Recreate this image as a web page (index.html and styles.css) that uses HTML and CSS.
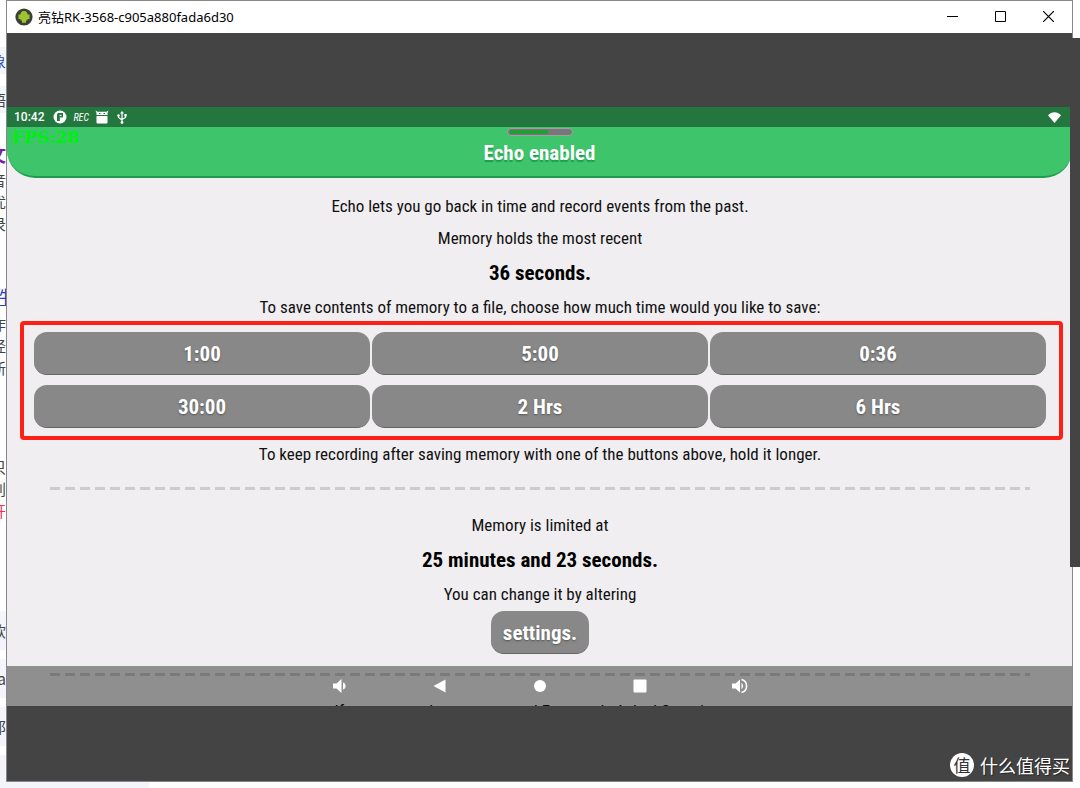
FILE: index.html
```
<!DOCTYPE html>
<html lang="en">
<head>
    <meta charset="UTF-8">
    <meta name="viewport" content="width=device-width, initial-scale=1.0">
    <title>Echo</title>
    <link rel="stylesheet" href="styles.css">
</head>
<body>
    <div class="desktop">
        <!-- page behind the window, only its edge is visible -->
        <div class="behind" lang="zh">
            <div class="chip blue">象</div>
            <div class="chip">语</div>
            <div class="heading">文</div>
            <div class="para"><span>音<br>优<br>录</span></div>
            <div class="link-line"><a href="#">件</a></div>
            <div class="para"><span>作<br>经<br>新</span></div>
            <div class="para lower"><span>只<br>别<br><span class="red">开</span></span></div>
            <div class="chip tall first">软</div>
            <div class="chip tall">a</div>
            <div class="chip tall">那</div>
        </div>
        <div class="behind-box"></div>

        <div class="window">
            <div class="title-bar">
                <svg class="app-icon" width="18" height="18" viewBox="0 0 18 18">
                    <circle cx="9" cy="9" r="8.6" fill="#3c3f3a"/>
                    <path d="M5.5 6.500a3.500 3.500 0 0 1 7 0h2v4.500h-2v1.500h-1.500v2.200H7v-2.200H5.500V11h-2V6.500z" fill="#9cc62e"/>
                </svg>
                <span class="title">亮钻RK-3568-c905a880fada6d30</span>
                <button class="win-btn" aria-label="Minimize"><svg width="11" height="11"><path d="M0 5.500h11" stroke="#000"/></svg></button>
                <button class="win-btn" aria-label="Maximize"><svg width="11" height="11"><path d="M.5.5h10v10H.5z" fill="none" stroke="#000"/></svg></button>
                <button class="win-btn" aria-label="Close"><svg width="11" height="11"><path d="M0 0l11 11M11 0L0 11" stroke="#000" stroke-width="1.2"/></svg></button>
            </div>

            <div class="screen">
                <div class="status-bar">
                    <span class="clock">10:42</span>
                    <svg width="14" height="14" viewBox="0 0 14 14"><circle cx="7" cy="7" r="6.500" fill="#fff"/><path d="M4 11V4.500a1.500 1.500 0 0 1 1.500-1.500H10v4.500H6.800V11z" fill="#24763f"/><path d="M6.500 4.800h2v1.400h-2z" fill="#fff"/></svg>
                    <span class="rec">REC</span>
                    <svg width="14" height="14" viewBox="0 0 14 14"><path d="M.5.5L2.500 1.800h9L13.500.5 12.500 3v2h-11V3zM1.500 6h11v6.500a1 1 0 0 1-1 1h-9a1 1 0 0 1-1-1z" fill="#fff"/><path d="M4 3h1.500v1H4zM8.500 3H10v1H8.500z" fill="#24763f"/></svg>
                    <svg class="usb" width="10" height="13" viewBox="0 0 10 13"><path d="M5 1v11M1.500 4.500v2L5 9M8.500 4v2.500L5 8.500" fill="none" stroke="#fff" stroke-width="1.200"/><path d="M5 0l2 2.500H3z" fill="#fff"/><circle cx="5" cy="11.500" r="1.400" fill="#fff"/><circle cx="1.500" cy="4.500" r="1.200" fill="#fff"/><path d="M7.300 3h2.400v2.400H7.300z" fill="#fff"/></svg>
                    <svg class="wifi" width="13" height="11" viewBox="0 0 13 11"><path d="M0 3.200C3.500-.8 9.500-.8 13 3.200L6.500 11z" fill="#fff"/></svg>
                </div>
                <header class="app-header">
                    <span class="fps">FPS:28</span>
                    <div class="level"><div class="level-fill"></div></div>
                    <h1>Echo enabled</h1>
                </header>

                <main>
                    <p>Echo lets you go back in time and record events from the past.</p>
                    <p>Memory holds the most recent</p>
                    <h2>36 seconds.</h2>
                    <p class="tight">To save contents of memory to a file, choose how much time would you like to save:</p>
                    <div class="save-buttons">
                        <button class="btn">1:00</button>
                        <button class="btn">5:00</button>
                        <button class="btn">0:36</button>
                        <button class="btn">30:00</button>
                        <button class="btn">2 Hrs</button>
                        <button class="btn">6 Hrs</button>
                    </div>
                    <p class="tight">To keep recording after saving memory with one of the buttons above, hold it longer.</p>
                    <div class="divider"></div>
                    <p>Memory is limited at</p>
                    <h2>25 minutes and 23 seconds.</h2>
                    <p class="tight">You can change it by altering</p>
                    <button class="btn settings">settings.</button>
                    <div class="divider"></div>
                    <p>If you want to learn more, read Frequently Asked Questions at</p>
                </main>

                <nav class="nav-bar">
                    <button aria-label="Volume down"><svg width="16" height="16" viewBox="0 0 16 16"><path d="M1 5.500h3.500L9.500 1v14l-5-4.500H1z" fill="#fff"/><path d="M11.500 4.800a4 4 0 0 1 0 6.400z" fill="#fff" stroke="#fff"/></svg></button>
                    <button aria-label="Back"><svg width="16" height="16" viewBox="0 0 16 16"><path d="M1.500 8L13.500 1.500v13z" fill="#fff"/></svg></button>
                    <button aria-label="Home"><svg width="16" height="16" viewBox="0 0 16 16"><circle cx="8" cy="8" r="6" fill="#fff"/></svg></button>
                    <button aria-label="Recents"><svg width="16" height="16" viewBox="0 0 16 16"><rect x="1.500" y="1.500" width="13" height="13" rx="1" fill="#fff"/></svg></button>
                    <button aria-label="Volume up"><svg width="16" height="16" viewBox="0 0 16 16"><path d="M0 5.500h3.500L8 1.500v13l-4.500-4H0z" fill="#fff"/><path d="M9.500 4.800a4 4 0 0 1 0 6.400z" fill="#fff"/><path d="M9.500 1.500a6.700 6.700 0 0 1 0 13" fill="none" stroke="#fff" stroke-width="1.600"/></svg></button>
                </nav>
            </div>

            <div class="watermark" lang="zh">
                <span class="badge">值</span>
                <span>什么值得买</span>
            </div>
        </div>

        <div class="side-panel"></div>
    </div>
</body>
</html>
```
FILE: styles.css
```
* {
    box-sizing: border-box;
}

body {
    margin: 0;
    background-color: #fff;
    color: #111;
    font-family: "Roboto Condensed", Roboto, sans-serif;
}

h1, h2, p {
    margin: 0;
}

button {
    border: none;
    padding: 0;
    background: none;
    font-family: inherit;
    cursor: pointer;
}

svg {
    display: block;
}

.desktop {
    position: relative;
    display: flex;
    height: 100vh;
    padding: 0 7px 6px 0;
    overflow: hidden;
}

/* page behind */
.behind {
    width: 6px;
    flex: none;
    padding-top: 47px;
    overflow: hidden;
    font: 15px/22px "Noto Sans CJK SC", sans-serif;
    color: #444;
}

.behind > div {
    display: flex;
    justify-content: flex-end;
}

.behind .chip {
    height: 27px;
    margin-bottom: 12px;
    line-height: 27px;
    background-color: #f4f5fa;
}

.behind .chip.tall {
    height: 39px;
    margin-bottom: 9px;
    line-height: 39px;
}

.behind .chip.first {
    margin-top: 89px;
}

.behind .blue {
    color: #2a3fc0;
}

.behind .heading {
    margin-top: 30px;
    color: #7a1fa8;
    font-size: 18px;
    font-weight: bold;
}

.behind .para {
    margin-top: 4px;
}

.behind .link-line {
    justify-content: center;
    margin: 50px 0 6px;
    font-size: 18px;
}

.behind .link-line a {
    color: #2a3fc0;
}

.behind .para.lower {
    margin-top: 77px;
}

.behind .red {
    color: #f0325a;
}

.behind-box {
    position: absolute;
    left: 0;
    bottom: 0;
    width: 149px;
    height: 33px;
    background-color: #f4f5fa;
}

/* window */
.window {
    position: relative;
    flex: 1;
    display: flex;
    flex-direction: column;
    padding-bottom: 75px;
    border: 1px solid #888;
    background-color: #444;
}

.title-bar {
    display: flex;
    align-items: center;
    height: 32px;
    margin-bottom: 74px;
    padding-left: 8px;
    background-color: #fff;
}

.title {
    flex: 1;
    margin-left: 5px;
    padding-bottom: 2px;
    color: #000;
    font: 13px "Noto Sans", "Noto Sans CJK SC", sans-serif;
}

.win-btn {
    display: flex;
    align-items: center;
    justify-content: center;
    width: 48px;
    height: 32px;
    padding-bottom: 2px;
}

.screen {
    position: relative;
    flex: 1;
    min-height: 0;
    overflow: hidden;
    background-color: #f0eef0;
}

.status-bar {
    display: flex;
    align-items: center;
    gap: 6px;
    height: 20px;
    padding: 0 11px 0 7px;
    background-color: #24763f;
    color: #fff;
}

.clock {
    margin-right: 3px;
    font: 500 12px Roboto, sans-serif;
}

.rec {
    font: italic 10px "Roboto Condensed", Roboto, sans-serif;
}

.usb {
    margin-left: 2px;
}

.wifi {
    margin-left: auto;
}

.app-header {
    position: relative;
    display: flex;
    flex-direction: column;
    align-items: center;
    height: 51px;
    border-bottom: 2px solid #1f9c50;
    border-radius: 0 0 28px 28px;
    background-color: #3ec56b;
}

.fps {
    position: absolute;
    top: 0;
    left: 5px;
    color: #00ee10;
    font: bold 17px/20px "DejaVu Serif", serif;
}

.level {
    width: 66px;
    height: 8px;
    margin-top: 1px;
    padding: 1px 2px;
    border: 1px solid #a0a0a0;
    border-radius: 4px;
    background-color: #777;
}

.level-fill {
    width: 64%;
    height: 4px;
    background: repeating-linear-gradient(90deg, #0fa828 0 3px, #5a7a5c 3px 4px);
}

h1 {
    color: #fff;
    font-size: 21px;
    line-height: 34px;
    text-shadow: 0 2px 1px #1f9c50;
}

main {
    padding: 12px 0 0 1px;
    text-align: center;
}

p {
    font-size: 17px;
    line-height: 32px;
}

p.tight {
    line-height: 28px;
}

h2 {
    color: #000;
    font-size: 21px;
    line-height: 39px;
}

.save-buttons {
    display: grid;
    grid-template-columns: repeat(3, 1fr);
    gap: 10px 2px;
    margin: 0 9px 0 12px;
    padding: 7px 13px 8px 10px;
    border: 4px solid #ff2015;
    border-radius: 4px;
}

.btn {
    height: 43px;
    padding-top: 2px;
    border-bottom: 1px solid #666;
    border-radius: 13px;
    background-color: #888;
    color: #fff;
    font-size: 21px;
    font-weight: bold;
    text-shadow: 0 1px 2px #555;
}

.settings {
    display: block;
    margin: 3px auto 0;
    padding: 2px 12px 0;
}

.divider {
    height: 3px;
    margin: 19px 42px;
    background: repeating-linear-gradient(90deg, #ccc 0 10px, transparent 10px 15px);
}

.nav-bar {
    position: absolute;
    left: 0;
    right: 0;
    bottom: 0;
    display: flex;
    justify-content: center;
    align-items: center;
    gap: 84px;
    height: 40px;
    background-color: rgba(0, 0, 0, 0.4);
}

.watermark {
    position: absolute;
    right: 2px;
    bottom: 3px;
    display: flex;
    align-items: center;
    gap: 6px;
    color: #fff;
    font: 18px/26px "Noto Sans CJK SC", sans-serif;
    text-shadow: 1px 1px 1px #222;
}

.badge {
    width: 24px;
    height: 24px;
    border-radius: 50%;
    background-color: #fff;
    color: #333;
    font-size: 17px;
    line-height: 24px;
    text-align: center;
    text-shadow: none;
}

/* dark panel that lies over the right edge */
.side-panel {
    position: absolute;
    top: 38px;
    right: 0;
    bottom: 221px;
    width: 10px;
    background-color: #444;
}
```
